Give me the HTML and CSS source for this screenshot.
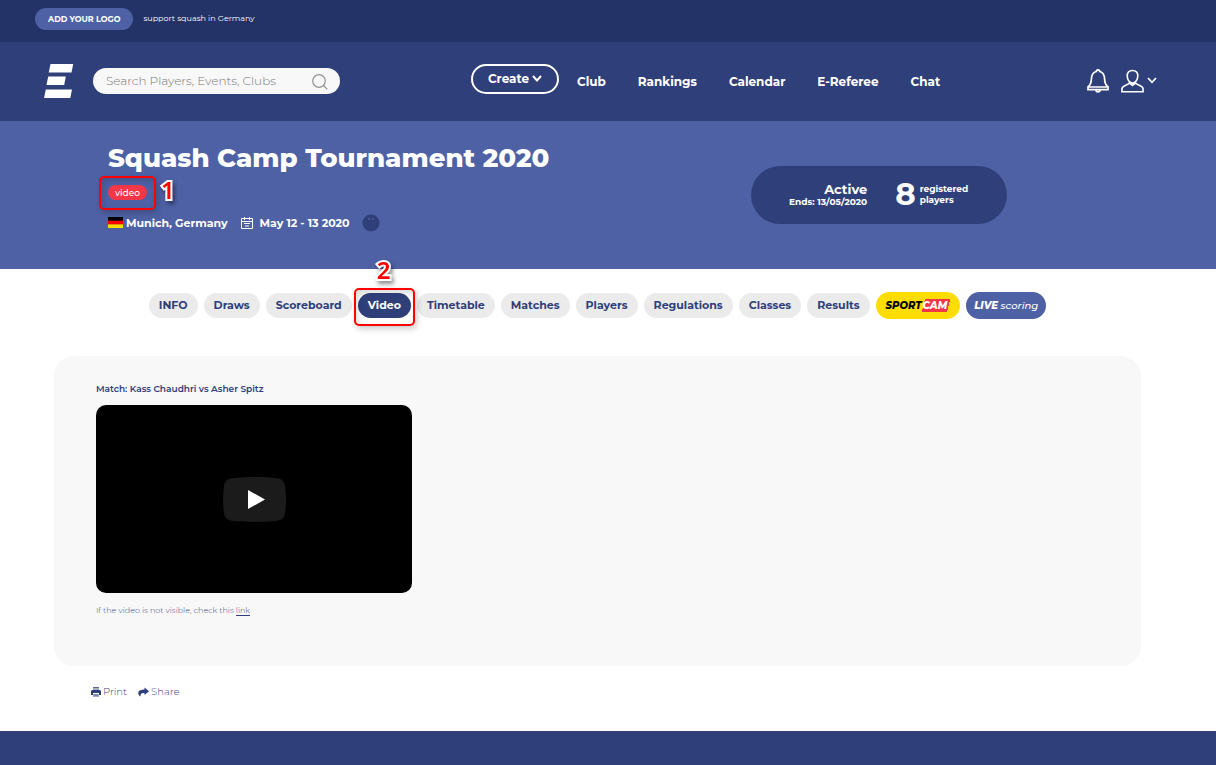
FILE: index.html
```html
<!DOCTYPE html>
<html lang="en">
<head>
<meta charset="utf-8">
<meta name="viewport" content="width=device-width, initial-scale=1">
<title>Squash Camp Tournament 2020</title>
<link rel="stylesheet" href="styles.css">
</head>
<body>
<div class="topbar">
  <button class="add-logo" type="button">ADD YOUR LOGO</button>
  <span class="support">support squash in Germany</span>
</div>
<header class="header">
  <a class="brand" href="#" aria-label="Home">
    <svg width="30" height="34" viewBox="0 0 30 34" fill="#fff"><path d="M6.500 0H29.200L27.500 8.500H4.700zM4.200 12.500H21.800L20.200 21H2.500zM1.800 25.500H28L26.300 34H0z"/></svg>
  </a>
  <form class="search">
    <input class="search-input" type="search" aria-label="Search" placeholder="Search Players, Events, Clubs">
    <button class="search-button" type="button" aria-label="Search">
      <svg width="16" height="16" viewBox="0 0 16 16" fill="none" stroke="#929292" stroke-width="1.200"><circle cx="7" cy="7" r="6.300"/><path d="M11.500 11.500L15.300 15.300"/></svg>
    </button>
  </form>
  <nav class="nav" aria-label="Main">
    <button class="create" type="button">Create
      <svg width="10" height="7" viewBox="0 0 10 7" fill="none" stroke="#fff" stroke-width="2"><path d="M1 1L5 5.500L9 1"/></svg>
    </button>
    <a class="nav-link" href="#">Club</a>
    <a class="nav-link" href="#">Rankings</a>
    <a class="nav-link" href="#">Calendar</a>
    <a class="nav-link" href="#">E-Referee</a>
    <a class="nav-link" href="#">Chat</a>
  </nav>
  <div class="account">
    <button class="icon-button" type="button" aria-label="Notifications">
      <svg width="22" height="24" viewBox="0 0 22 24" fill="none" stroke="#fff" stroke-width="1.700"><path d="M9.300 2.500C9.300 .3 12.700 .3 12.700 2.500C16.300 3.500 17.500 6.500 17.600 10C17.700 14 18.500 16 21 17.800V20.700H1V17.800C3.500 16 4.300 14 4.400 10C4.500 6.500 5.700 3.500 9.300 2.500zM1.500 18H20.500M9 21C9 23.600 13 23.600 13 21"/></svg>
    </button>
    <button class="icon-button profile" type="button" aria-label="Profile">
      <svg width="23" height="24" viewBox="0 0 24 24" fill="none" stroke="#fff" stroke-width="1.700"><path d="M12 1C8.300 1 6.300 3.500 6.500 7C6.700 10.700 9 14.200 12 14.200S17.300 10.700 17.500 7C17.700 3.500 15.700 1 12 1zM9 13.500C8.700 16.500 1.500 16 1 20V23.200H23V20C22.500 16 15.300 16.500 15 13.500M9 14.200L12 16.600L15 14.200"/></svg>
      <svg width="10" height="7" viewBox="0 0 10 7" fill="none" stroke="#fff" stroke-width="1.700"><path d="M1 1L5 5.300L9 1"/></svg>
    </button>
  </div>
</header>
<section class="hero">
  <div class="event">
    <h1 class="title">Squash Camp Tournament 2020</h1>
    <div class="badge-row">
      <span class="mark"><span class="badge">video</span><span class="mark-box mark-box-badge"></span><span class="mark-number mark-one">1</span></span>
    </div>
    <div class="meta">
      <svg class="flag" width="15" height="11" viewBox="0 0 15 11"><path fill="#000" d="M0 0h15v4H0z"/><path fill="#f00" d="M0 3.700h15v4H0z"/><path fill="#ffdc00" d="M0 7.400h15V11H0z"/></svg>
      <span class="place">Munich, Germany</span>
      <svg class="calendar" width="12" height="12" viewBox="0 0 12 12" fill="none" stroke="#fff"><path d="M.5 1.500h11v10H.5zM.5 4.500h11M3.500 0v3M8.500 0v3M3 6.500h6M4 9h4"/></svg>
      <span class="dates">May 12 - 13 2020</span>
      <svg class="ball" width="18" height="18" viewBox="0 0 18 18"><circle cx="9" cy="9" r="8.500" fill="#2f3f7a"/><circle cx="7" cy="5" r="1" fill="#5161a3"/><circle cx="11" cy="5" r="1" fill="#5161a3"/></svg>
    </div>
  </div>
  <div class="status">
    <div class="status-state"><strong class="active">Active</strong><span class="small">Ends: 13/05/2020</span></div>
    <strong class="count">8</strong>
    <span class="small">registered<br>players</span>
  </div>
</section>
<nav class="tabs" aria-label="Tournament">
  <a class="tab" href="#">INFO</a>
  <a class="tab" href="#">Draws</a>
  <a class="tab" href="#">Scoreboard</a>
  <span class="mark"><a class="tab tab-active" href="#" aria-current="page">Video</a><span class="mark-box mark-box-tab"></span><span class="mark-number mark-two">2</span></span>
  <a class="tab" href="#">Timetable</a>
  <a class="tab" href="#">Matches</a>
  <a class="tab" href="#">Players</a>
  <a class="tab" href="#">Regulations</a>
  <a class="tab" href="#">Classes</a>
  <a class="tab" href="#">Results</a>
  <a class="tab promo sportcam" href="#">SPORT<span class="cam">CAM</span></a>
  <a class="tab promo live" href="#"><b class="live-word">LIVE</b>&nbsp;scoring</a>
</nav>
<main class="panel">
  <h2 class="match">Match: Kass Chaudhri vs Asher Spitz</h2>
  <div class="video">
    <button class="play" type="button" aria-label="Play">
      <svg width="63" height="45" viewBox="0 0 63 45"><path fill="#1b1b1b" d="M9 1.300C22-.3 41-.3 54 1.300C59 2 61.500 4.500 62 9C63.300 18 63.300 27 62 36C61.500 40.500 59 43 54 43.700C41 45.300 22 45.300 9 43.700C4 43 1.500 40.500 1 36C-.3 27-.3 18 1 9C1.500 4.500 4 2 9 1.300z"/><path fill="#fff" d="M25 13v19l17-9.500z"/></svg>
    </button>
  </div>
  <p class="note">If the video is not visible, check this <a class="note-link" href="#">link</a></p>
</main>
<div class="actions">
  <button class="action" type="button">
    <svg width="10" height="10" viewBox="0 0 10 10"><path fill="#a5acc8" d="M2 0h6v3H2zM2 7h6v3H2z"/><path fill="#2f3f7a" d="M1 3h8l1 1v4H8V6H2v2H0V4z"/><path stroke="#2f3f7a" stroke-width=".7" d="M3 8h4M2 .4h6"/></svg>Print
  </button>
  <button class="action" type="button">
    <svg width="11" height="10" viewBox="0 0 11 10"><path fill="#2f3f7a" d="M6.500 .5L11 4.200L6.500 8V6C3.500 5.800 2.200 6.600 2.500 9.500C.8 8.500 0 7 .3 5.500C.7 3.300 3 2.500 6.500 2.500z"/></svg>Share
  </button>
</div>
<footer class="footer"></footer>
</body>
</html>
```
FILE: styles.css
```css
* { box-sizing: border-box; }
body {
  display: flex;
  flex-direction: column;
  min-height: 100vh;
  margin: 0;
  background: #fff;
  color: #2f3f7a;
  font-family: Montserrat, Inter, "Open Sans", sans-serif;
  font-size: 11px;
}
button, input { font: inherit; }
button {
  padding: 0;
  border: 0;
  background: none;
  color: inherit;
  cursor: pointer;
}
a { color: inherit; text-decoration: none; }
svg { display: block; flex: none; }

.topbar {
  display: flex;
  align-items: center;
  gap: 10px;
  padding: 8px 35px 12px;
  background: #233267;
  color: #fff;
  font-size: 8px;
}
.add-logo {
  height: 22px;
  padding: 0 13px;
  border-radius: 11px;
  background: #4e61a5;
  font-weight: 700;
}
.support { padding-bottom: 2px; }

.header {
  display: flex;
  align-items: center;
  min-height: 79px;
  padding: 0 59px 2px 44px;
  background: #2f3f7a;
  color: #fff;
}
.search {
  display: flex;
  align-items: center;
  flex: 0 1 247px;
  height: 26px;
  margin-left: 19px;
  padding: 0 12px 0 13px;
  border-radius: 13px;
  background: #f8f8f8;
}
.search-button { padding-top: 2px; }
.search-input {
  flex: 1;
  min-width: 0;
  padding: 0;
  border: 0;
  outline: 0;
  background: none;
  color: #333;
  font-size: 12px;
  font-weight: 300;
}
.search-input::placeholder { color: #777; opacity: 1; }
.nav {
  display: flex;
  align-items: center;
  gap: 32px;
  margin-left: 131px;
  font-size: 12px;
  font-weight: 700;
}
.nav-link { padding-top: 2px; }
.create {
  display: flex;
  align-items: center;
  justify-content: center;
  gap: 3px;
  width: 88px;
  height: 30px;
  margin: 0 -14px 4px 0;
  border: 2px solid #fff;
  border-radius: 15px;
}
.account {
  display: flex;
  align-items: center;
  gap: 12px;
  margin-left: auto;
}
.profile { display: flex; align-items: center; gap: 3px; }

.hero {
  display: flex;
  align-items: center;
  justify-content: space-between;
  min-height: 148px;
  padding: 0 209px 0 108px;
  background: #4e61a5;
  color: #fff;
}
.event { padding-bottom: 18px; }
.title {
  margin: 0;
  font-size: 26px;
  line-height: 34px;
  font-weight: 800;
}
.badge-row { display: flex; margin: 10px 0 14px; }
.mark { position: relative; display: inline-flex; }
.badge {
  padding: 0 7px;
  border-radius: 8px;
  background: #f33748;
  font-size: 9px;
  line-height: 15px;
  font-weight: 500;
}
.mark-box {
  position: absolute;
  border: 2px solid #f00;
  border-radius: 5px;
  box-shadow: 2px 3px 6px rgba(0, 0, 0, .2), inset 2px 3px 6px rgba(0, 0, 0, .15);
  pointer-events: none;
}
.mark-box-badge { inset: -9px -9px -10px; }
.mark-box-tab { inset: -5px -4px -8px; }
.mark-number {
  position: absolute;
  color: #f00;
  font-family: "Noto Sans", "Open Sans", sans-serif;
  font-size: 24px;
  line-height: 24px;
  font-weight: 600;
  -webkit-text-stroke: 4px #fff;
  paint-order: stroke fill;
  filter: drop-shadow(2px 3px 2px rgba(0, 0, 0, .45));
}
.mark-one { left: 53px; top: -7px; }
.mark-two { left: 19px; top: -35px; }
.meta {
  display: flex;
  align-items: center;
  font-weight: 700;
}
.place { margin-left: 3px; }
.calendar { margin-left: 13px; }
.dates { margin-left: 7px; }
.ball { margin-left: 12px; }
.status {
  display: flex;
  align-items: center;
  width: 256px;
  height: 58px;
  padding: 0 0 2px 38px;
  border-radius: 29px;
  background: #2f3f7a;
}
.status-state {
  display: flex;
  flex-direction: column;
  align-items: flex-end;
}
.active { font-size: 13px; line-height: 14px; }
.small { font-size: 9px; line-height: 11px; font-weight: 700; }
.count {
  margin: 0 4px 0 28px;
  font-size: 31px;
  line-height: 40px;
  font-weight: 700;
}

.tabs {
  display: flex;
  align-items: center;
  justify-content: center;
  gap: 6px;
  min-height: 73px;
  padding-right: 21px;
}
.tab {
  padding: 0 10px;
  border-radius: 13px;
  background: #ebebeb;
  line-height: 25px;
  font-weight: 700;
  white-space: nowrap;
}
.tab-active { background: #2f3f7a; color: #fff; }
.promo {
  line-height: 27px;
  border-radius: 14px;
  font-size: 10px;
  font-style: italic;
}
.sportcam { background: #fd0; color: #000; font-weight: 800; }
.cam {
  padding: 0 3px 0 1px;
  background: linear-gradient(105deg, transparent 3px, #f33748 3px, #f33748 calc(100% - 3px), transparent calc(100% - 3px));
  color: #fff;
}
.live { padding: 0 8px; background: #4e61a5; color: #fff; font-weight: 500; }
.live-word { font-weight: 800; }

.panel {
  min-height: 310px;
  margin: 14px 75px 0 54px;
  padding: 27px 42px;
  border-radius: 20px;
  background: #f8f8f8;
}
.match {
  margin: 0 0 10px;
  font-size: 9px;
  line-height: 12px;
  font-weight: 600;
}
.video {
  display: flex;
  align-items: center;
  justify-content: center;
  max-width: 316px;
  height: 188px;
  border-radius: 10px;
  background: #000;
}
.note {
  margin: 11px 0 0;
  color: #3b4880;
  font-size: 8px;
  line-height: 12px;
  font-weight: 300;
}
.note-link { border-bottom: 1px solid #2f3f7a; }
.actions {
  display: flex;
  gap: 11px;
  margin: 19px 91px 32px;
}
.action {
  display: flex;
  align-items: center;
  gap: 2px;
  color: #3b4880;
  font-size: 10px;
  line-height: 14px;
  font-weight: 300;
}
.footer { flex: 1; min-height: 34px; background: #2f3f7a; }
```
